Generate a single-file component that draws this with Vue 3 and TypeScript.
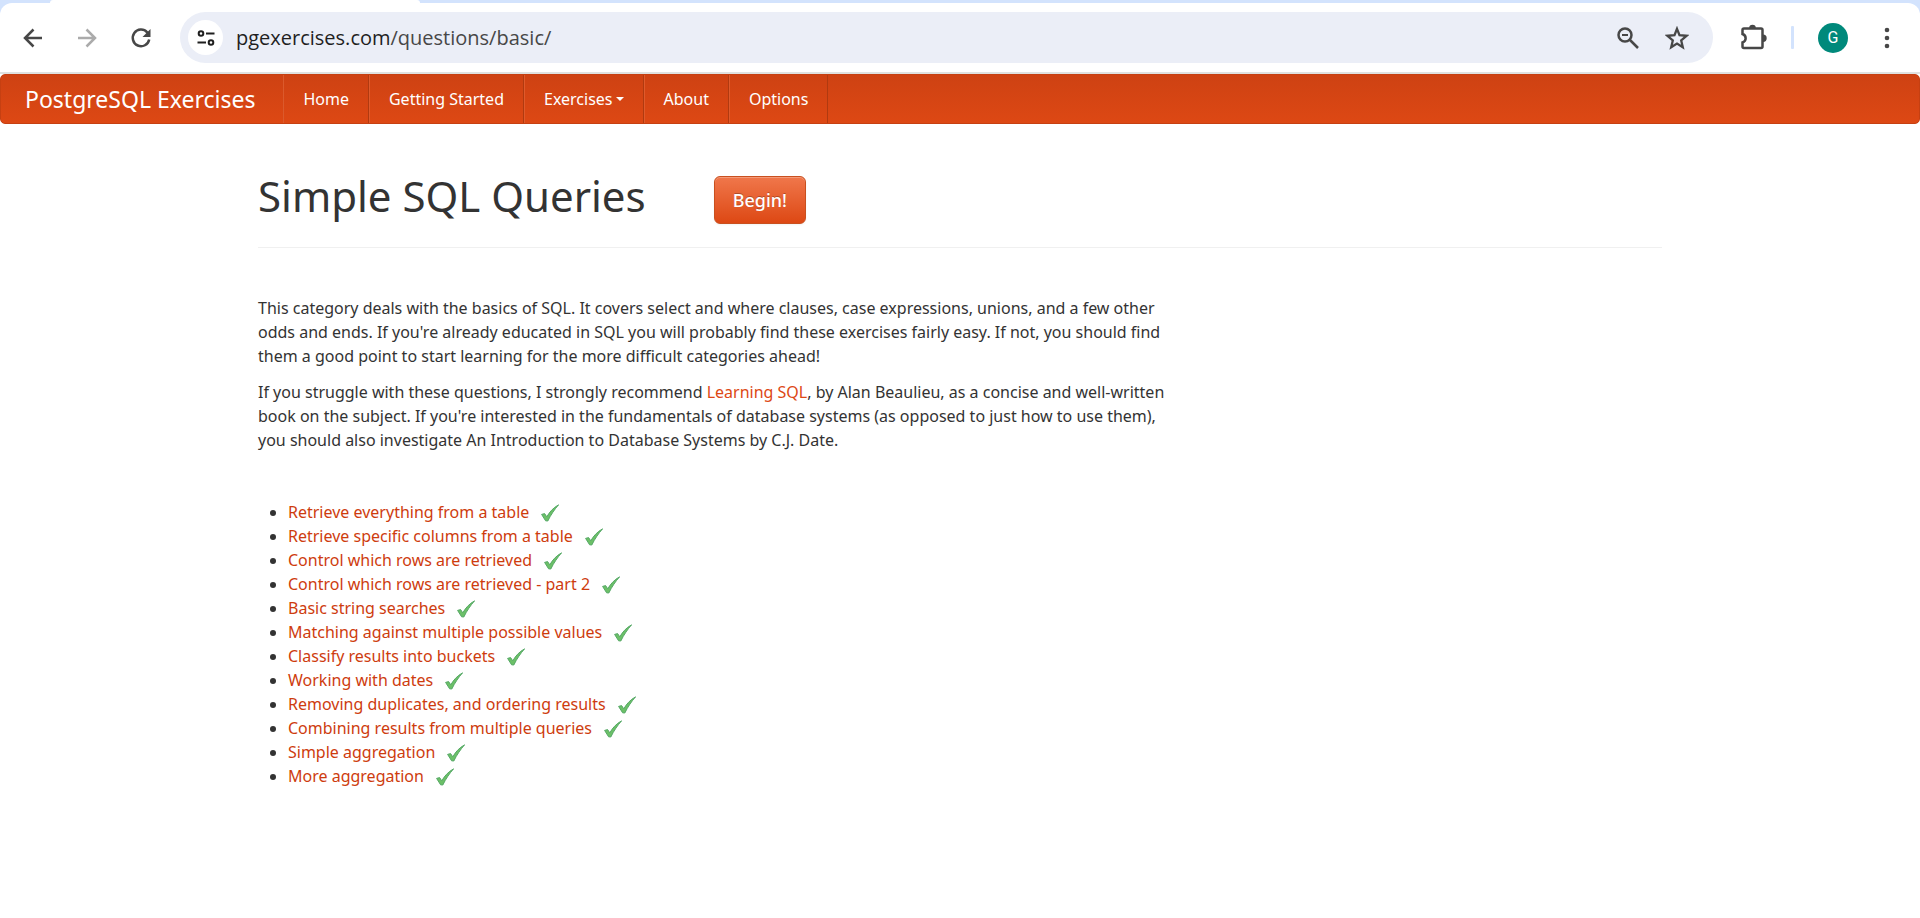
<script setup lang="ts">
import { ref } from 'vue'

interface NavItem {
  label: string
  caret?: boolean
}

const address = ref('pgexercises.com/questions/basic/')

const navItems: NavItem[] = [
  { label: 'Home' },
  { label: 'Getting Started' },
  { label: 'Exercises', caret: true },
  { label: 'About' },
  { label: 'Options' },
]

const exercises: string[] = [
  'Retrieve everything from a table',
  'Retrieve specific columns from a table',
  'Control which rows are retrieved',
  'Control which rows are retrieved - part 2',
  'Basic string searches',
  'Matching against multiple possible values',
  'Classify results into buckets',
  'Working with dates',
  'Removing duplicates, and ordering results',
  'Combining results from multiple queries',
  'Simple aggregation',
  'More aggregation',
]
</script>

<template>
  <div class="window">
    <header class="chrome">
      <div class="tabstrip"><span class="tab"></span></div>
      <div class="toolbar">
        <button class="tool" type="button" aria-label="Back">
          <svg viewBox="0 0 24 24"><path d="M21 12H4.500M12.500 3.500L4 12l8.500 8.500" /></svg>
        </button>
        <button class="tool faded" type="button" aria-label="Forward" disabled>
          <svg viewBox="0 0 24 24"><path d="M3 12h16.500M11.500 3.500L20 12l-8.500 8.500" /></svg>
        </button>
        <button class="tool" type="button" aria-label="Reload">
          <svg viewBox="0 0 24 24">
            <path d="M20.200 13.500A8.300 8.300 0 1 1 18.200 6.300L20 8.500" />
            <path class="solid" d="M21.500 3v8h-8z" />
          </svg>
        </button>
        <div class="omnibox">
          <button class="site" type="button" aria-label="Site information">
            <svg viewBox="0 0 20 20">
              <circle cx="5" cy="5.500" r="2.300" /><path d="M10 5.500h8.500M1.500 14.500H10" />
              <circle cx="15" cy="14.500" r="2.300" />
            </svg>
          </button>
          <label class="address">
            <input v-model="address" type="text" aria-label="Address" />
            <span class="typed" aria-hidden="true">pgexercises.com<span>/questions/basic/</span></span>
          </label>
          <button class="tool" type="button" aria-label="Zoom">
            <svg viewBox="0 0 24 24">
              <circle cx="9" cy="9" r="6.500" /><path d="M14 14l8 8" /><path class="thin" d="M6 9h6" />
            </svg>
          </button>
          <button class="tool" type="button" aria-label="Bookmark this page">
            <svg viewBox="0 0 24 24">
              <path class="star" d="M12 2.800l2.500 6.400 7 .6-5.300 4.600 1.600 6.800-5.800-3.600-5.800 3.600 1.600-6.800-5.300-4.600 7-.6z" />
            </svg>
          </button>
        </div>
        <button class="tool" type="button" aria-label="Extensions">
          <svg class="puzzle" viewBox="0 0 28 28">
            <path d="M5 5.500h17q1.500 0 1.500 1.500v16.500q0 1.500-1.500 1.500H5q-1.500 0-1.500-1.500V19.500c4.200-1.500 4.200-7 0-8.500V7q0-1.500 1.500-1.500z" />
            <path class="solid" d="M10.200 5a3.300 3.300 0 0 1 6.600 0zM24 11.500a3.700 3.700 0 0 1 0 7.400z" />
          </svg>
        </button>
        <span class="divider"></span>
        <button class="avatar" type="button" aria-label="Profile">G</button>
        <button class="tool" type="button" aria-label="Menu">
          <svg viewBox="0 0 24 24">
            <g class="solid"><circle cx="12" cy="4" r="2.300" /><circle cx="12" cy="12" r="2.300" /><circle cx="12" cy="20" r="2.300" /></g>
          </svg>
        </button>
      </div>
    </header>

    <nav class="navbar">
      <a class="brand" href="#">PostgreSQL Exercises</a>
      <ul class="nav">
        <li v-for="item in navItems" :key="item.label">
          <a href="#">{{ item.label }}<span v-if="item.caret" class="caret"></span></a>
        </li>
      </ul>
    </nav>

    <main class="container">
      <div class="page-header">
        <h1>Simple SQL Queries</h1>
        <button class="begin" type="button">Begin!</button>
      </div>
      <section class="intro">
        <p>
          This category deals with the basics of SQL. It covers select and where clauses, case expressions, unions, and a few other<br />
          odds and ends. If you're already educated in SQL you will probably find these exercises fairly easy. If not, you should find<br />
          them a good point to start learning for the more difficult categories ahead!
        </p>
        <p>
          If you struggle with these questions, I strongly recommend <a href="#">Learning SQL</a>, by Alan Beaulieu, as a concise and well-written<br />
          book on the subject. If you're interested in the fundamentals of database systems (as opposed to just how to use them),<br />
          you should also investigate An Introduction to Database Systems by C.J. Date.
        </p>
      </section>
      <ul class="exercises">
        <li v-for="title in exercises" :key="title">
          <a href="#">{{ title }}</a>
          <svg class="check" viewBox="0 0 18 18">
            <path d="M.6 10.400l3-.8 2.200 3.200C8.500 8 12 4 17.600.8 13.500 5.500 10 10.500 6.800 17L4.600 16.800z" />
          </svg>
        </li>
      </ul>
    </main>
  </div>
</template>

<style>
body {
  background: #fff;
}
</style>

<style scoped>
.window {
  color: #333;
  font-family: "Noto Sans", "Open Sans", sans-serif;
  font-size: 16px;
  line-height: 24px;
}

button {
  padding: 0;
  border: 0;
  background: none;
  font-family: inherit;
}

a {
  color: #dd4814;
  text-decoration: none;
}

.chrome {
  border-bottom: 2px solid #dfe1e0;
  background: #d3e3fd;
}

.tabstrip {
  display: flex;
  height: 3px;
  padding-left: 50px;
}

.tab {
  width: 370px;
  border-radius: 4px 4px 0 0;
  background: #fff;
}

.toolbar {
  display: flex;
  align-items: center;
  height: 69px;
  padding: 0 17px;
  border-radius: 12px 12px 0 0;
  background: #fff;
}

.tool {
  display: flex;
  flex: none;
  align-items: center;
  justify-content: center;
  width: 32px;
  height: 32px;
  margin-right: 22px;
  color: #474747;
}

.tool svg {
  width: 24px;
  height: 24px;
}

.faded {
  color: #ababab;
}

svg {
  fill: none;
  stroke: currentColor;
  stroke-width: 2.5;
}

.solid {
  fill: currentColor;
  stroke: none;
}

.thin {
  stroke-width: 2;
}

.star {
  stroke-width: 2.3;
}

.tool .puzzle {
  width: 28px;
  height: 28px;
  margin-bottom: 2px;
}

.omnibox {
  display: flex;
  flex: 1;
  align-items: center;
  height: 51px;
  margin-right: 24px;
  margin-left: 1px;
  padding: 0 0 0 8px;
  border-radius: 26px;
  background: #ebeef7;
}

.omnibox .tool {
  margin-right: 17px;
}

.omnibox .tool:last-child {
  margin-right: 20px;
}

.site {
  display: flex;
  align-items: center;
  justify-content: center;
  width: 35px;
  height: 35px;
  border-radius: 50%;
  background: #fff;
  color: #1f1f1f;
}

.site svg {
  width: 20px;
  height: 20px;
  stroke-width: 2;
}

.address {
  display: grid;
  flex: 1;
  margin-left: 13px;
  font-family: "Open Sans", "Noto Sans", sans-serif;
  font-size: 20px;
  line-height: 28px;
}

.address input,
.typed {
  grid-area: 1 / 1;
}

.address input {
  min-width: 0;
  padding: 0;
  border: 0;
  outline: 0;
  background: transparent;
  color: transparent;
  caret-color: #1f1f1f;
  font: inherit;
}

.typed {
  color: #1f1f1f;
  pointer-events: none;
}

.typed span {
  color: #474747;
}

.divider {
  width: 3px;
  height: 23px;
  margin-right: 24px;
  border-radius: 1px;
  background: #d3e3fd;
}

.avatar {
  width: 30px;
  height: 30px;
  margin-right: 23px;
  border-radius: 50%;
  background: #00897b;
  color: #fff;
  font-family: Roboto, sans-serif;
  font-size: 16px;
}

.toolbar > .tool:last-child {
  margin-right: 0;
}

.navbar {
  box-sizing: border-box;
  display: flex;
  height: 50px;
  border: 1px solid #c64012;
  border-radius: 5px;
  background: linear-gradient(#ce4213, #dd4814);
}

.brand {
  padding: 0 28px 0 24px;
  color: #fff;
  font-size: 23px;
  line-height: 48px;
}

.nav {
  display: flex;
  margin: 0;
  padding: 0;
  border-left: 1px solid #db5a2c;
  list-style: none;
}

.nav a {
  display: flex;
  align-items: center;
  padding: 0 19px;
  border-right: 1px solid #b03a10;
  color: #fff;
  line-height: 48px;
}

.nav li + li a {
  border-left: 1px solid #e05a2b;
}

.caret {
  margin-left: 3px;
  border: 4px solid transparent;
  border-top-color: #fff;
  border-bottom: 0;
}

.container {
  box-sizing: border-box;
  max-width: 1404px;
  margin: 0 auto;
  padding-bottom: 24px;
}

.page-header {
  display: flex;
  align-items: center;
  gap: 68px;
  margin-bottom: 48px;
  padding: 44px 0 23px;
  border-bottom: 1px solid #f0f0f0;
}

h1 {
  margin: 0;
  font-size: 42px;
  font-weight: 400;
  line-height: 56px;
}

.begin {
  height: 48px;
  margin-top: 8px;
  padding: 0 18px;
  border: 1px solid #c9501f;
  border-radius: 6px;
  background: linear-gradient(#f0774b, #dd4814);
  box-shadow: inset 0 1px 0 #f49a78, 0 1px 2px #0000000d;
  color: #fff;
  font-size: 18px;
  font-weight: 500;
  text-shadow: 0 -1px 0 #00000040;
}

p {
  margin: 0 0 12px;
  white-space: nowrap;
}

.exercises {
  margin: 48px 0 0 30px;
  padding: 0;
}

.exercises a {
  color: #ce3c0e;
}

.check {
  width: 18px;
  height: 18px;
  margin-left: 8px;
  margin-left: 12px;
  fill: #6cc067;
  stroke: #55a866;
  stroke-width: 1;
  vertical-align: -4px;
}
</style>
